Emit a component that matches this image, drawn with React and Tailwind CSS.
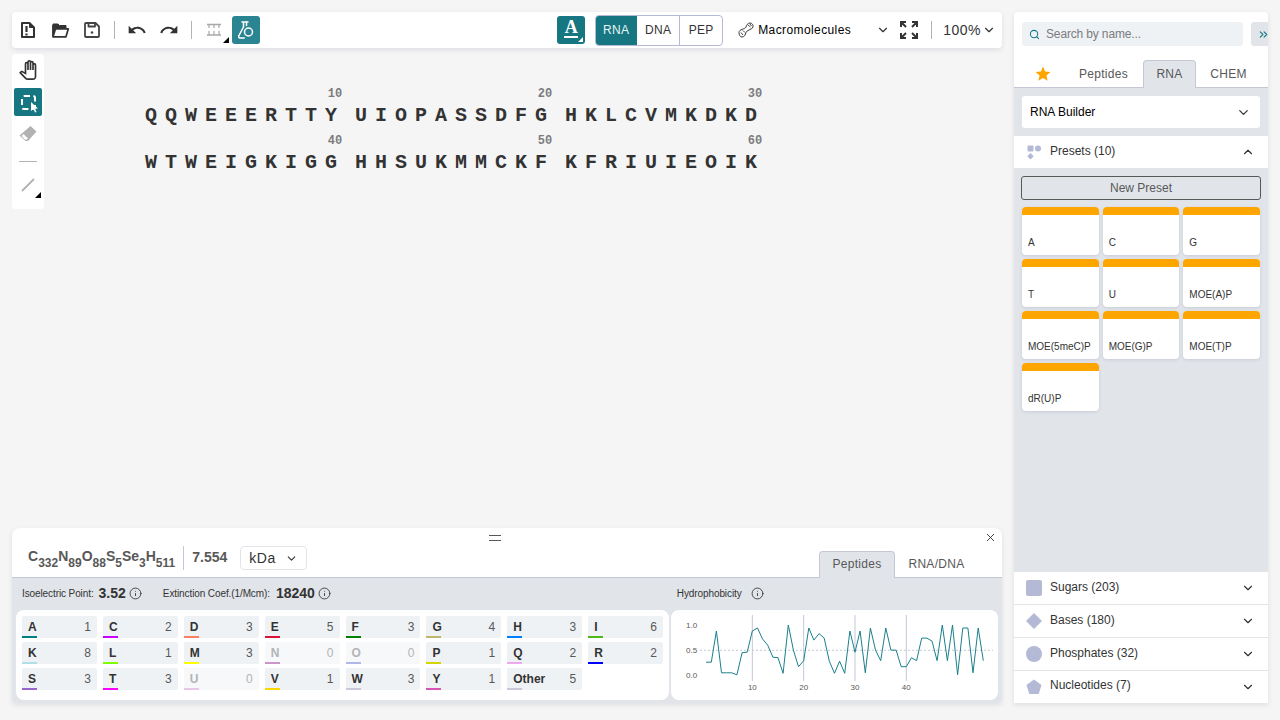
import React from "react";
import { ChevronDown, ChevronUp, Search, ChevronsRight, X, Info } from "lucide-react";
import { MdUndo, MdRedo, MdOutlinePanTool, MdStar } from "react-icons/md";

const rows = [
  { marks: [10, 20, 30], groups: ["QQWEEERTTY", "UIOPASSDFG", "HKLCVMKDKD"] },
  { marks: [40, 50, 60], groups: ["WTWEIGKIGG", "HHSUKMMCKF", "KFRIUIEOIK"] },
];
const aminos = [
  ["A", 1, "bg-[#008080]"], ["C", 2, "bg-[#c800ff]"], ["D", 3, "bg-[#ff8060]"], ["E", 5, "bg-[#dc143c]"],
  ["F", 3, "bg-[#008000]"], ["G", 4, "bg-[#bdb76b]"], ["H", 3, "bg-[#0080ff]"], ["I", 6, "bg-[#4db81a]"],
  ["K", 8, "bg-[#b0e0e6]"], ["L", 1, "bg-[#7fff00]"], ["M", 3, "bg-[#ffff00]"], ["N", 0, "bg-[#c896c8]"],
  ["O", 0, "bg-[#b0b8e8]"], ["P", 1, "bg-[#d4d400]"], ["Q", 2, "bg-[#eeaaee]"], ["R", 2, "bg-[#0000ff]"],
  ["S", 3, "bg-[#9966cc]"], ["T", 3, "bg-[#ff00ff]"], ["U", 0, "bg-[#e8c8e8]"], ["V", 1, "bg-[#ffd700]"],
  ["W", 3, "bg-[#c8c8d8]"], ["Y", 1, "bg-[#d855b5]"], ["Other", 5, "bg-[#c8c8d8]"],
];
const presets = ["A", "C", "G", "T", "U", "MOE(A)P", "MOE(5meC)P", "MOE(G)P", "MOE(T)P", "dR(U)P"];
const vals = [.26,.26,.88,.05,.05,.05,.01,.45,.46,.88,.94,.72,.6,.36,.35,.04,1,.5,.17,.29,.94,.7,.83,.74,.28,.04,.28,.04,.88,.46,.88,.05,.94,.5,.29,.94,.5,.5,.17,.17,.35,.29,.74,.74,.68,.29,1,.29,1,.01,.94,.94,.05,.94,.29];
const chartX = (i) => 81.33 + (i - 10) * 5.133;
const chartY = (v) => 65.3 - v * 50.3;
const points = vals.map((v, i) => `${chartX(i + 1).toFixed(1)},${chartY(v).toFixed(1)}`).join(" ");

const Corner = ({ className }) => (
  <span className={`absolute w-0 h-0 border-l-[6px] border-l-transparent border-b-[6px] border-b-black ${className}`} />
);

function Sep() {
  return <div className="w-px h-[18px] bg-[#b4b4b4] mx-[8px]" />;
}

function ToolBtn({ children, active, bg }) {
  return (
    <div className={`relative w-7 h-7 flex items-center justify-center rounded-[3px] ${active ? `${bg} text-white` : "text-[#333]"}`}>
      {children}
    </div>
  );
}

function Toolbar() {
  return (
    <div className="h-9 shrink-0 bg-white rounded-[4px] shadow-[0_2px_5px_rgba(103,104,132,0.15)] flex items-center pl-[2px] pr-[2px]">
      <ToolBtn>
        <svg width="14" height="16" viewBox="0 0 14 16" fill="none" stroke="#333" strokeWidth="2" strokeLinejoin="round"><path d="M1 1h7.500L13 5.500V15H1z" /><path d="M8.500 1v4.500H13" fill="#333" strokeWidth="1" /><path d="M5.500 4v6M5.500 11.500v2" strokeWidth="2.200" /></svg>
      </ToolBtn>
      <div className="w-[4px]" />
      <ToolBtn>
        <svg width="17" height="15" viewBox="0 0 17 15" fill="none" stroke="#333" strokeWidth="1.700" strokeLinejoin="round"><path d="M1 1h5l1.500 1.500h6.500V5H3L1 13.500z" fill="#333" strokeWidth="1" /><path d="M1 14V2M1 13.800l2.500-8h12.800l-2.300 8z" /></svg>
      </ToolBtn>
      <div className="w-[4px]" />
      <ToolBtn>
        <svg width="16" height="16" viewBox="0 0 16 16" fill="none" stroke="#444" strokeWidth="1.800" strokeLinejoin="round"><path d="M2 1h9.500L15 4.500V14a1 1 0 0 1-1 1H2a1 1 0 0 1-1-1V2a1 1 0 0 1 1-1z" /><path d="M4.500 1.500v3h6.500v-3" /><circle cx="8" cy="10.500" r="1.300" fill="#444" stroke="none" /></svg>
      </ToolBtn>
      <Sep />
      <ToolBtn><MdUndo size={20} /></ToolBtn>
      <div className="w-[4px]" />
      <ToolBtn><MdRedo size={20} /></ToolBtn>
      <Sep />
      <ToolBtn>
        <svg width="16" height="16" viewBox="0 0 16 16" fill="none" stroke="#a8a8a8" strokeWidth="1.200"><path d="M1 2.500h14M1 13h14" strokeWidth="1.600" /><path d="M3 3v3M8 3v3M13 3v3M3 9v4M8 9v4M13 9v4" /></svg>
        <Corner className="right-[-1px] bottom-[1px]" />
      </ToolBtn>
      <div className="ml-[4px]">
        <ToolBtn active bg="bg-[#2b8491]">
          <svg width="16" height="18" viewBox="0 0 16 18" fill="none" stroke="#fff" strokeWidth="1.500" strokeLinejoin="round" strokeLinecap="round"><path d="M4 1h6M5.500 1v5L1 14.500A1.500 1.500 0 0 0 2.300 17h4" /><path d="M8.500 1v3.500" /><circle cx="10.500" cy="11" r="4" /></svg>
        </ToolBtn>
      </div>
      <div className="flex-1" />
      <ToolBtn active bg="bg-[#167782]">
        <span className="text-[18px] font-bold leading-none mt-[-6px] font-['Liberation_Serif',serif]">A</span>
        <span className="absolute left-[7px] right-[7px] bottom-[6px] h-[2px] bg-white" />
        <span className="absolute right-[2px] bottom-[2px] w-0 h-0 border-l-[5px] border-l-transparent border-b-[5px] border-b-white" />
      </ToolBtn>
      <div className="ml-[10px] flex h-[31px] text-[12px] tracking-[0.3px] text-[#333] rounded-[4px] border border-[#b4b9d6] overflow-hidden">
        <div className="w-[42px] -ml-px -my-px bg-[#167782] text-[#e8f4f5] flex items-center justify-center">RNA</div>
        <div className="w-[43px] flex items-center justify-center border-r border-[#b4b9d6]">DNA</div>
        <div className="w-[42px] flex items-center justify-center">PEP</div>
      </div>
      <div className="ml-[15px] w-[16px] h-[16px]">
        <svg width="16" height="16" viewBox="0 0 16 16" fill="none" stroke="#333" strokeWidth="1"><path d="M1 10.500c0-3.500 6-3 7-5.500 .5-1.500 1.500-4 4-4 2 0 3.500 2 3 4-1 3-6 2.500-7 5.500-.5 2-1.500 4.500-4 4.500-2 0-3-2-3-4.500z" /><path d="M3 10.500l2 2.500M5 8.500l2 2M10 3l2.500 2M12 2l1.500 2" strokeWidth="0.900" /></svg>
      </div>
      <span className="ml-[4px] w-[118px] text-[12px] text-[#000] tracking-[0.4px]">Macromolecules</span>
      <ChevronDown size={14} className="text-[#333]" />
      <div className="ml-[10px]">
        <svg width="18" height="18" viewBox="0 0 18 18" fill="none" stroke="#333" strokeWidth="2"><path d="M1 6V1h5M1 1l5 5M17 6V1h-5M17 1l-5 5M1 12v5h5M1 17l5-5M17 12v5h-5M17 17l-5-5" /></svg>
      </div>
      <div className="w-px h-[18px] bg-[#b4b4b4] ml-[13px] mr-[11px]" />
      <span className="text-[14px] tracking-[0.5px] text-[#333]">100%</span>
      <ChevronDown size={14} className="text-[#333] ml-[1px] mr-[4px]" />
    </div>
  );
}

function SideTools() {
  return (
    <div className="w-8 h-[155px] shrink-0 bg-white rounded-[4px] flex flex-col items-center pt-[2px]">
      <div className="w-7 h-7 flex items-center justify-center"><MdOutlinePanTool size={20} className="text-[#333]" /></div>
      <div className="mt-[4px] relative w-7 h-7 bg-[#167782] rounded-[2px] flex items-center justify-center">
        <div className="w-[15px] h-[15px] border-2 border-dashed border-white rounded-[3px]" />
        <svg className="absolute right-[3px] bottom-[3px]" width="8" height="11" viewBox="0 0 8 11" fill="#fff"><path d="M0 0l7 6.500H4l1.500 3.500-1.500.5L2.500 7 0 9z" /></svg>
      </div>
      <div className="mt-[4px] w-7 h-7 flex items-center justify-center">
        <svg width="18" height="17" viewBox="0 0 18 17"><path d="M11.500 0l6 5.500L9 15H6.500L.5 9.500z" fill="#b2b2b2" /><path d="M4.500 8l4.500 4.500-1.800 1.300H6L2.500 10z" fill="#fff" /></svg>
      </div>
      <div className="w-[18px] h-px bg-[#b4b4b4] mt-[13px]" />
      <div className="mt-[9px] relative w-7 h-7 flex items-center justify-center">
        <svg width="14" height="14" viewBox="0 0 14 14" stroke="#b2b2b2" strokeWidth="1.800"><path d="M1 13L13 1" /></svg>
        <Corner className="right-[1px] bottom-[1px]" />
      </div>
    </div>
  );
}

function Sequence() {
  return (
    <div className="ml-[101px] pt-[34px] flex flex-col font-['Liberation_Mono',monospace]">
      {rows.map((row, r) => (
        <div key={r} className="flex gap-2.5 h-[47px]">
          {row.groups.map((g, i) => (
            <div key={i} className="relative flex h-[47px] items-start">
              <span className="absolute right-[0px] top-[-1px] text-[12px] font-bold leading-[14px] text-[#7c7c7f] w-[20px] text-center">{row.marks[i]}</span>
              <div className="flex pt-[18px]">
                {g.split("").map((c, k) => (
                  <span key={k} className="w-5 text-[20px] font-bold leading-[20px] text-[#333]">{c}</span>
                ))}
              </div>
            </div>
          ))}
        </div>
      ))}
    </div>
  );
}

function InfoIcon({ size = 13 }) {
  return <Info size={size} strokeWidth={1.600} className="text-[#333]" />;
}

function BottomPanel() {
  const sub = "text-[12px] align-[-3px] leading-none";
  const small = "text-[10px] tracking-[-0.1px]";
  return (
    <div className="relative h-[175px] shrink-0 bg-white rounded-t-[8px] rounded-b-[4px] overflow-hidden flex flex-col shadow-[0_2px_5px_rgba(103,104,132,0.15)]">
      <div className="absolute left-[477px] top-[7px] w-3 h-[6px] border-y border-[#585858]" />
      <X size={13} strokeWidth={1.700} className="absolute right-[5px] top-[3px] text-[#333]" />
      <div className="h-[50px] shrink-0 flex items-end justify-between border-b border-[#c4c8d6] pl-[16px] pr-[24px]">
        <div className="flex items-center h-[24px] mb-[7px]">
          <span className="text-[14px] font-bold text-[#585858] leading-none -mt-[2px]">
            C<sub className={sub}>332</sub>N<sub className={sub}>89</sub>O<sub className={sub}>88</sub>S<sub className={sub}>5</sub>Se<sub className={sub}>3</sub>H<sub className={sub}>511</sub>
          </span>
          <div className="w-px h-[24px] bg-[#c4c8d6] ml-[8px] mr-[8px]" />
          <span className="text-[14px] font-bold text-[#585858] -mt-[2px]">7.554</span>
          <div className="ml-[13px] w-[67px] h-[24px] border border-[#e1e5ea] rounded-[4px] flex items-center justify-between pl-[8px] pr-[8px] text-[14px] tracking-[0.5px] text-[#333]">
            <span>kDa</span><ChevronDown size={13} />
          </div>
        </div>
        <div className="flex text-[12px] h-[27px] -mb-px tracking-[0.3px]">
          <div className="w-[76px] pb-[2px] bg-[#e1e5ea] border border-b-0 border-[#c4c8d6] rounded-t-[4px] flex items-center justify-center text-[#585858]">Peptides</div>
          <div className="w-[83px] pb-[2px] flex items-center justify-center text-[#585858]">RNA/DNA</div>
        </div>
      </div>
      <div className="flex-1 bg-[#e1e5ea] px-[4px] flex flex-col">
        <div className="h-[32px] shrink-0 flex items-center pb-[2px] text-[#333]">
          <span className={`ml-[6px] ${small}`}>Isoelectric Point:</span>
          <span className="ml-[5px] text-[14px] font-bold">3.52</span>
          <span className="ml-[3px]"><InfoIcon /></span>
          <span className={`ml-[21px] ${small}`}>Extinction Coef.(1/Mcm):</span>
          <span className="ml-[6px] text-[14px] font-bold">18240</span>
          <span className="ml-[3px]"><InfoIcon /></span>
          <span className={`ml-[346px] ${small}`}>Hydrophobicity</span>
          <span className="ml-[9px]"><InfoIcon /></span>
        </div>
        <div className="flex gap-[2px]">
          <div className="w-[653px] h-[90px] bg-white rounded-[8px] pt-[6px] px-[6px] grid grid-cols-8 gap-x-[6px] gap-y-[4px] content-start">
            {aminos.map(([n, c, bar]) => (
              <div key={n} className={`relative h-[22px] rounded-[2px] flex items-center justify-between pl-[6px] pr-[6px] text-[12px] ${c === 0 ? "bg-[#f6f8fa] text-[#b4b4b4]" : "bg-[#eff2f5] text-[#333]"}`}>
                <span className="font-bold">{n}</span>
                <span className={c === 0 ? "" : "text-[#585858]"}>{c}</span>
                <span className={`absolute left-0 bottom-0 w-[15px] h-[2px] ${bar}`} />
              </div>
            ))}
          </div>
          <div className="w-[327px] h-[90px] bg-white rounded-[8px]">
            <svg width="327" height="90" viewBox="0 0 327 90" fontFamily="Liberation Sans" fontSize="8" fill="#585858">
              {[10, 20, 30, 40].map((t) => (
                <g key={t}>
                  <line x1={chartX(t)} x2={chartX(t)} y1="5" y2="71" stroke="#c4c8d6" strokeWidth="1" />
                  <text x={chartX(t)} y="80" textAnchor="middle">{t}</text>
                </g>
              ))}
              <line x1="29" x2="322" y1="40.300" y2="40.300" stroke="#c4c8d6" strokeWidth="1" strokeDasharray="2 2" />
              <text x="15" y="18">1.0</text>
              <text x="15" y="43">0.5</text>
              <text x="15" y="68">0.0</text>
              <polyline points={points} fill="none" stroke="#1b7f8b" strokeWidth="1" />
            </svg>
          </div>
        </div>
      </div>
    </div>
  );
}

function Accordion({ label, icon, last }) {
  return (
    <div className={`shrink-0 bg-white flex items-center pl-[12px] pr-[13px] ${last ? "h-[32px]" : "h-[33px] border-b border-[#e1e5ea]"}`}>
      <span className="w-[16px] h-[16px] flex items-center justify-center">{icon}</span>
      <span className={`ml-[8px] flex-1 text-[12px] text-[#333] ${last ? "-mt-[4px]" : "-mt-[3px]"}`}>{label}</span>
      <ChevronDown size={14} className="text-[#333]" />
    </div>
  );
}

function RightPanel() {
  return (
    <div className="w-[254px] shrink-0 h-[691px] bg-white rounded-t-[4px] overflow-hidden flex flex-col shadow-[0_2px_5px_rgba(103,104,132,0.15)]">
      <div className="h-[48px] shrink-0 flex items-start pt-[10px] pl-[8px]">
        <div className="w-[221px] shrink-0 h-[24px] bg-[#eff2f5] rounded-[3px] flex items-center pl-[7px] text-[12px] tracking-[-0.15px] text-[#7c7c7f]">
          <Search size={11} strokeWidth={2.200} className="text-[#167782]" />
          <span className="ml-[6px]">Search by name...</span>
        </div>
        <div className="ml-[8px] w-[24px] h-[24px] shrink-0 bg-[#e1e5ea] rounded-[3px] flex items-center justify-center">
          <ChevronsRight size={13} className="text-[#167782]" />
        </div>
      </div>
      <div className="h-[28px] shrink-0 flex items-end border-b border-[#c4c8d6] text-[12px] text-[#585858] tracking-[0.3px]">
        <div className="w-[50px] pl-[8px] h-full flex items-center justify-center"><MdStar size={18} className="text-[#ffa500]" /></div>
        <div className="w-[79px] h-full flex items-center justify-center">Peptides</div>
        <div className="w-[53px] h-[28px] pb-[2px] -mb-px bg-[#e1e5ea] border border-b-0 border-[#c4c8d6] rounded-t-[4px] flex items-center justify-center">RNA</div>
        <div className="w-[65px] h-full flex items-center justify-center">CHEM</div>
      </div>
      <div className="h-[48px] shrink-0 bg-[#e1e5ea] flex items-center px-[8px]">
        <div className="w-full h-[32px] bg-white rounded-[3px] flex items-center justify-between pl-[8px] pr-[9px] text-[12px] text-[#000]">
          <span>RNA Builder</span><ChevronDown size={15} className="text-[#333]" />
        </div>
      </div>
      <div className="h-[32px] shrink-0 bg-white flex items-center pl-[13px] pr-[13px]">
        <svg width="15" height="15" viewBox="0 0 15 15" fill="#b4b9d6"><rect x="0.500" y="0.500" width="6" height="6" rx="1" /><circle cx="11" cy="3.500" r="3" /><path d="M3.500 8l3.200 3.200-3.200 3.200-3.200-3.200z" /></svg>
        <span className="ml-[8px] flex-1 text-[12px] text-[#333] -mt-[2px]">Presets (10)</span>
        <ChevronUp size={14} className="text-[#333]" />
      </div>
      <div className="flex-1 bg-[#e1e5ea] px-[8px] flex flex-col">
        <div className="-mx-px mt-[8px] h-[24px] shrink-0 border border-[#585858] rounded-[3px] flex items-center justify-center text-[12px] text-[#585858]">New Preset</div>
        <div className="mt-[7px] grid grid-cols-3 gap-x-[4px] gap-y-[4px]">
          {presets.map((p) => (
            <div key={p} className="h-[48px] bg-white rounded-[4px] overflow-hidden flex flex-col shadow-[0_1px_3px_rgba(103,104,132,0.2)]">
              <div className="h-[8px] bg-[#ffa500]" />
              <div className="flex-1 flex items-end pb-[6px] pl-[6px] text-[10px] leading-[12px] text-[#333]">{p}</div>
            </div>
          ))}
        </div>
      </div>
      <Accordion label="Sugars (203)" icon={<span className="w-[16px] h-[16px] bg-[#b4b9d6] rounded-[2px]" />} />
      <Accordion label="Bases (180)" icon={<svg width="16" height="16" viewBox="0 0 16 16" fill="#b4b9d6"><path d="M8 0l8 8-8 8-8-8z" /></svg>} />
      <Accordion label="Phosphates (32)" icon={<span className="w-[16px] h-[16px] bg-[#b4b9d6] rounded-full" />} />
      <Accordion last label="Nucleotides (7)" icon={<svg width="16" height="16" viewBox="0 0 16 16" fill="#b4b9d6"><path d="M8 .500l7.500 5.500-2.800 9H3.300L.500 6z" /></svg>} />
    </div>
  );
}

export default function App() {
  return (
    <div className="w-[1280px] h-[720px] overflow-hidden bg-[#f5f5f5] flex gap-3 p-3 pb-0 font-['Liberation_Sans',sans-serif]">
      <div className="w-[990px] shrink-0 h-[691px] flex flex-col">
        <Toolbar />
        <div className="flex-1 flex pt-[6px] min-h-0">
          <SideTools />
          <Sequence />
        </div>
        <BottomPanel />
      </div>
      <RightPanel />
    </div>
  );
}
